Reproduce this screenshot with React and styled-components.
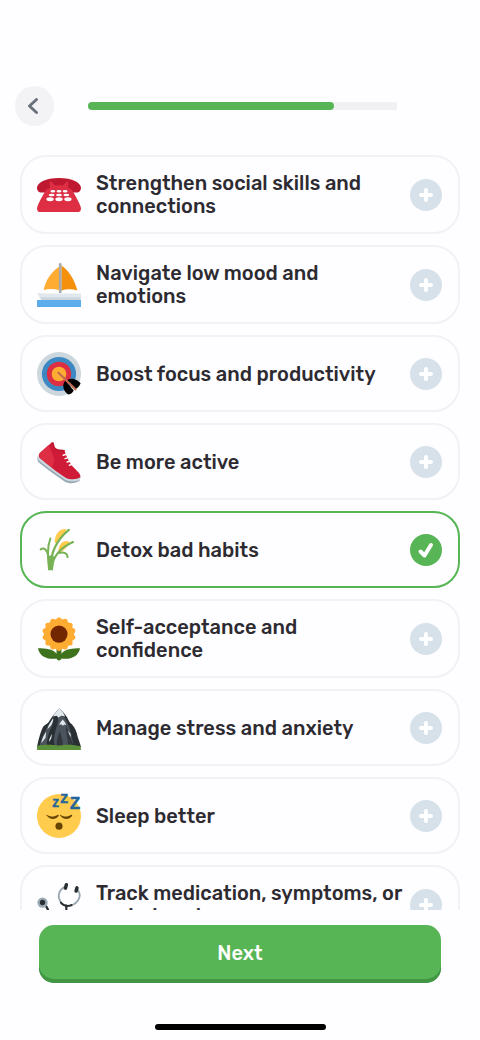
import React, { useState } from 'react';
import styled, { createGlobalStyle } from 'styled-components';

const GlobalStyle = createGlobalStyle`
  * {
    box-sizing: border-box;
  }

  body {
    margin: 0;
    background: #fefdff;
    color: #2d2b31;
    font-family: Rubik, Roboto, 'Liberation Sans', sans-serif;
  }
`;

const Screen = styled.div`
  display: flex;
  flex-direction: column;
  height: 100vh;
  overflow: hidden;
`;

const Header = styled.header`
  display: flex;
  align-items: center;
  gap: 34px;
  padding: 86px 83px 29px 15px;
`;

const BackButton = styled.button`
  display: flex;
  align-items: center;
  justify-content: center;
  flex: none;
  width: 39px;
  height: 40px;
  padding: 0 3px 0 0;
  border: 0;
  border-radius: 50%;
  background: #f3f2f5;
  color: #6a717c;
  cursor: pointer;
`;

const Track = styled.div`
  flex: 1;
  height: 8px;
  border-radius: 4px 0 0 4px;
  background: #f1f0f3;
`;

const TrackFill = styled.div`
  height: 100%;
  border-radius: 4px;
  background: #58b556;
`;

const GoalList = styled.main`
  display: flex;
  flex: 1;
  flex-direction: column;
  gap: 11px;
  min-height: 0;
  padding: 0 20px;
  overflow: hidden;
`;

const GoalCard = styled.button`
  display: flex;
  align-items: center;
  flex: none;
  gap: 15px;
  width: 100%;
  min-height: 77px;
  padding: 15px 16px 14px 15px;
  border: 2px solid ${(props) => (props.$selected ? '#58b556' : '#f2f1f5')};
  border-radius: 26px;
  background: #fefdff;
  color: inherit;
  font: inherit;
  text-align: left;
  cursor: pointer;
`;

const GoalLabel = styled.span`
  flex: 1;
  min-width: 0;
  font-size: 20px;
  font-weight: 500;
  line-height: 23px;
  white-space: pre;
`;

const Emoji = styled.svg`
  flex: none;
  width: 44px;
  height: 44px;
  overflow: visible;
`;

const Badge = styled.span`
  display: flex;
  flex: none;
  width: 32px;
  height: 32px;
  border-radius: 50%;
  background: ${(props) => (props.$selected ? '#58b556' : '#d6e1ea')};
`;

const Footer = styled.footer`
  display: flex;
  flex-direction: column;
  align-items: center;
  padding: 15px 39px 10px;
`;

const NextButton = styled.button`
  width: 100%;
  height: 58px;
  padding: 0 0 3px;
  border: 0;
  border-radius: 15px;
  background: #58b556;
  box-shadow: inset 0 -4px #429644;
  color: #fff;
  font: inherit;
  font-size: 20px;
  font-weight: 500;
  cursor: pointer;
`;

const HomeBar = styled.div`
  width: 171px;
  height: 6px;
  margin-top: 41px;
  border-radius: 3px;
  background: #000;
`;

const Phone = () => (
  <Emoji viewBox="0 0 36 36" aria-hidden="true">
    <path fill="#be1931" d="M36 12c0-4-7-8-18-8S0 8 0 12c0 2 1 4 4 4 4 0 6-1 7-4h14c1 3 3 4 7 4 3 0 4-2 4-4z" />
    <path fill="#dd2e44" d="M11 12c-1-3-1-5 0-5 2 0 2 3 4 3h6c2 0 2-3 4-3 1 0 1 2 0 5l3 1c2 3 8 13 8 16 0 2-1 3-3 3H3c-2 0-3-1-3-3 0-3 6-13 8-16z" />
    <g fill="#fff">
      <ellipse cx="13" cy="15" rx="2" ry="1" />
      <ellipse cx="18" cy="15" rx="2" ry="1" />
      <ellipse cx="23" cy="15" rx="2" ry="1" />
      <ellipse cx="12" cy="18" rx="2.4" ry="1.1" />
      <ellipse cx="18" cy="18" rx="2.4" ry="1.1" />
      <ellipse cx="24" cy="18" rx="2.4" ry="1.1" />
      <ellipse cx="10.7" cy="21.5" rx="3" ry="1.6" />
      <ellipse cx="18" cy="21.5" rx="3" ry="1.6" />
      <ellipse cx="25.3" cy="21.5" rx="3" ry="1.6" />
    </g>
  </Emoji>
);

const Sailboat = () => (
  <Emoji viewBox="0 0 36 36" aria-hidden="true">
    <path fill="#ffac33" d="M18 3C12 7 7 14 5.500 22c4-1 8-1 12.500 0z" />
    <path fill="#f4900c" d="M20 2C26 6 31 14 33 22.500c-4-1.500-9-1.500-13 0z" />
    <path fill="#e1e8ed" d="M0 24.500l8 .5h28v3c0 1-.5 2.500-1 3H4c-1-3-3-4-4-6.500z" />
    <path fill="#ccd6dd" d="M2 28h34c0 1-.5 2-1 3H4c-.5-1-1-2-2-3z" />
    <path fill="#a7a9ac" d="M17.900 1c0-1.300 2.200-1.300 2.200 0v23.500h-2.200z" />
    <path fill="#5dadec" d="M0 30.300h36V36H0z" />
  </Emoji>
);

const Target = () => (
  <Emoji viewBox="0 0 36 36" aria-hidden="true">
    <circle fill="#ccd6dd" cx="18" cy="18" r="18" />
    <circle fill="#3b88c3" cx="18" cy="18" r="14" />
    <circle fill="#dd2e44" cx="18" cy="18" r="10" />
    <circle fill="#ffac33" cx="18" cy="18" r="6" />
    <path fill="#000" d="M24 23.500c1.500-1.500 4-2 6-1.500 2.500.5 4.500 2 5.700 3.500-1 2.500-3 4.500-4.500 5z" />
    <path fill="#000" d="M23.200 23.500c-1.700 1.500-2 4-1.500 6 .6 2.500 2.300 4.500 4 5.300 2-.3 3.500-1.600 4.300-3.300z" />
    <path stroke="#c1694f" strokeWidth="1.700" strokeLinecap="round" d="M17.500 17L31.500 30.500" />
  </Emoji>
);

const Shoe = () => (
  <Emoji viewBox="0 0 36 36" aria-hidden="true">
    <path fill="#9aaab4" d="M.8 13C0 15 .2 17 1.500 18.500c7 6 15 11 21 15.500 4 2.500 10 1.500 12.700-1l-1-2z" />
    <path fill="#ccd6dd" d="M1 12.500c-.7 1.500-.5 3 .5 4.300C9 23 17 28 23 32.500c4 2 9 1.500 12 0l.7-2z" />
    <path fill="#cf1b38" d="M2.500 10.500C6 7.500 9.500 4 12 2c2-.5 1.500 3.500 3 5 1.800 1.700 4.500 1.500 7.500 1.700 1 3 3.500 9.500 7.500 13.800 3 3 6 5.500 5.500 8-3 2-9 2-12 .3C17 27 9 20.500 2.500 15c-1.300-1.500-1.300-3 0-4.500z" />
    <path fill="#dd2e44" d="M2.500 10.500L9.500 4c1 4 4 7 4.500 11 .3 3-1 5-1.500 7.500L2.500 15c-1.300-1.500-1.300-3 0-4.500z" />
    <path fill="#be1931" d="M11.500 2.500c1-1 2.200-.8 2.400.5.3 1.800.7 3.300 1.900 4 2 1 4.400 1 6.900 1.200l.2 1c-3.500.3-6.500.3-8.400-1.200-1.700-1.300-2-3.500-3-5.500z" />
    <g stroke="#fff" strokeWidth="1.200" strokeLinecap="round">
      <path d="M21.500 12.500l3-1M23 15.200l3-1M24.700 18l3-1M26.500 20.700l2.700-1" />
    </g>
  </Emoji>
);

const Rice = () => (
  <Emoji viewBox="0 0 36 36" aria-hidden="true">
    <path fill="#ffcc4d" d="M24 1c-5-1-10 4-9.500 11.500C18 11 22 7 24 1z" />
    <path fill="#ffcc4d" d="M26.500 11C21 9 17 14 17.500 20.500 21 19 25 16 26.500 11z" />
    <g fill="none" stroke="#77b255" strokeLinecap="round">
      <path strokeWidth="1.800" d="M11 33C11 20 17 9 26 1.500" />
      <path strokeWidth="1.800" d="M11.500 33c2-11 8-17 18-21.500" />
      <path strokeWidth="1.600" d="M10 33c-1-9-2-17 1-24.500" />
      <path strokeWidth="1.600" d="M10.500 33C10 23 8 14 3 17.500" />
      <path strokeWidth="1.600" d="M18 20.500c4-1 7 0 7 3.500" />
    </g>
    <path fill="#77b255" d="M8.500 24c2-2 4-2 6 0L13 34.500H9z" />
  </Emoji>
);

const PETALS = Array.from({ length: 14 }, (_, i) => (i * 360) / 14);

const Sunflower = () => (
  <Emoji viewBox="0 0 36 36" aria-hidden="true">
    <path fill="#3e721d" d="M16 25h4v5c3-4 9-4.500 15.200-4.500C34 32 28 35 20 34c0 2-4 2-4 0C8 35 2 32 .8 25.500 7 25.500 13 26 16 30z" />
    {PETALS.map((angle) => (
      <ellipse
        key={angle}
        fill="#ffac33"
        cx="18"
        cy="4.500"
        rx="2.800"
        ry="4.300"
        transform={`rotate(${angle} 18 14)`}
      />
    ))}
    <circle fill="#ffac33" cx="18" cy="14" r="12.300" />
    <circle fill="#732700" cx="18" cy="14" r="7" />
  </Emoji>
);

const Mountain = () => (
  <Emoji viewBox="0 0 36 36" aria-hidden="true">
    <path fill="#292f33" d="M0 34c1-6 3-13 5-17 1-1.500 4-2.500 5-4.500C12 9 15 5 18.500 2c3 3 5 5 6.500 8 1 2 1.500 3.500 3.500 5 3 3 4 7 5 11 1 3 2 5 2.500 8z" />
    <path fill="#4b545d" d="M13 9c1 3 0 6-1.500 9C9.500 22 8 28 8 33H2c1-5 3-10 5-13 2-4 4-7 6-11z" />
    <path fill="#4b545d" d="M17 9c2-1 5-1 6 1 2 4 4 8 5 13l2 10H15c-2-4-1-8 0-12 1-5 3-8 2-12z" />
    <path fill="#31373d" d="M24 16c2 4 3 9 6 17h-5c1-6-2-11-1-17zM19 20c0 5 3 8 2 13h-5c0-5 1-9 3-13z" />
    <path fill="#e1e8ed" d="M18.500 2c-2 1.800-4 4-5.500 6.500L16 8l1.500 1.500L20 8l3 .5C22 6 20.500 4 18.500 2z" />
    <path fill="#e1e8ed" d="M13.300 10c-2 3-4.300 6-4.800 9l3-3c1-2 2-4 1.800-6zM21 11c-1.300 1.500-2.500 3-2.700 4.500l1.700-.5 1 1.200 1.500-1 1.300.5C23.500 14 22.500 12.500 21 11zM7.500 21c-2 3-3.500 6-4 9.500L7 26zM12.500 23c-1.500 2-2.500 4-2.800 6.500l1.800-2.500zM25 20l2.500 3v2.500z" />
    <path fill="#5c913b" d="M.2 32.500c5-.5 8-1 13-.5 4 .5 6 .5 10-.3 4-.2 9 .3 12.300 1.300l.5 3H0z" />
  </Emoji>
);

const Sleepy = () => (
  <Emoji viewBox="0 0 36 36" aria-hidden="true">
    <circle fill="#ffcc4d" cx="18" cy="18" r="18" />
    <path fill="#664500" d="M8 17c2.500 2 6.500 2 9 0 .8-.3 1 .7.500 1.300-2 2.800-7 2.800-9 0-.5-.6-1.200-1-.5-1.300zM19 17c2.500 2 6.500 2 9 0 .8-.3 1 .7.500 1.300-2 2.800-7 2.800-9 0-.5-.6-1.200-1-.5-1.300z" />
    <circle fill="#664500" cx="18" cy="26.300" r="2.900" />
    <g fill="#269" stroke="#269" strokeWidth=".5" fontFamily="Liberation Sans, sans-serif" fontWeight="700">
      <text x="12.700" y="10.500" fontSize="8.500">Z</text>
      <text x="19.300" y="7.200" fontSize="10">Z</text>
      <text x="27" y="12.300" fontSize="13.500">Z</text>
    </g>
  </Emoji>
);

const Stethoscope = () => (
  <Emoji viewBox="0 0 36 36" aria-hidden="true">
    <g fill="none" strokeLinecap="round">
      <path stroke="#292f33" strokeWidth="1.800" d="M7 18.500c3 3 3 10 7 13s10 1 10-5v-8" />
      <path stroke="#9aaab4" strokeWidth="1.500" d="M22 3.500c-4.500 3-5.500 8-2.500 12M32.500 5c4 3.500 3 9-2.500 12.500" />
      <path stroke="#292f33" strokeWidth="1.600" d="M19.500 16c2.500 3 6 3.300 9 2" />
      <path stroke="#292f33" strokeWidth="2.900" d="M24 1.500l-.7 2.700M32.700 4L32 6.500" />
    </g>
    <circle fill="#99aab5" cx="4.500" cy="16" r="4.200" />
    <circle fill="#292f33" cx="4.500" cy="16" r="2.200" />
  </Emoji>
);

const BadgeIcon = ({ selected }) => (
  <svg viewBox="0 0 32 32" fill="none" stroke="#fff" strokeWidth="4" strokeLinecap="round" strokeLinejoin="round" aria-hidden="true">
    {selected ? <path d="M10.500 17.500l4 4L21 11" /> : <path d="M16 11v10M11 16h10" />}
  </svg>
);

const GOALS = [
  { id: 'social', icon: Phone, label: 'Strengthen social skills and\nconnections' },
  { id: 'mood', icon: Sailboat, label: 'Navigate low mood and\nemotions' },
  { id: 'focus', icon: Target, label: 'Boost focus and productivity' },
  { id: 'active', icon: Shoe, label: 'Be more active' },
  { id: 'habits', icon: Rice, label: 'Detox bad habits' },
  { id: 'confidence', icon: Sunflower, label: 'Self-acceptance and\nconfidence' },
  { id: 'stress', icon: Mountain, label: 'Manage stress and anxiety' },
  { id: 'sleep', icon: Sleepy, label: 'Sleep better' },
  { id: 'track', icon: Stethoscope, label: 'Track medication, symptoms, or\nperiod cycle' },
];

const App = () => {
  const [selected, setSelected] = useState(['habits']);
  const progress = 79.5;

  const toggle = (id) => {
    setSelected((ids) => (ids.includes(id) ? ids.filter((other) => other !== id) : [...ids, id]));
  };

  return (
    <Screen>
      <GlobalStyle />
      <Header>
        <BackButton type="button" aria-label="Back">
          <svg width="12" height="18" viewBox="0 0 12 18" fill="none" stroke="currentColor" strokeWidth="3" strokeLinecap="round" strokeLinejoin="round">
            <path d="M9.500 2.500L2.500 9l7 6.500" />
          </svg>
        </BackButton>
        <Track role="progressbar" aria-label="Progress" aria-valuenow={progress}>
          <TrackFill style={{ width: `${progress}%` }} />
        </Track>
      </Header>
      <GoalList>
        {GOALS.map(({ id, icon: Icon, label }) => {
          const isSelected = selected.includes(id);
          return (
            <GoalCard
              key={id}
              type="button"
              aria-pressed={isSelected}
              $selected={isSelected}
              onClick={() => toggle(id)}
            >
              <Icon />
              <GoalLabel>{label}</GoalLabel>
              <Badge $selected={isSelected}>
                <BadgeIcon selected={isSelected} />
              </Badge>
            </GoalCard>
          );
        })}
      </GoalList>
      <Footer>
        <NextButton type="button">Next</NextButton>
        <HomeBar />
      </Footer>
    </Screen>
  );
};

export default App;
